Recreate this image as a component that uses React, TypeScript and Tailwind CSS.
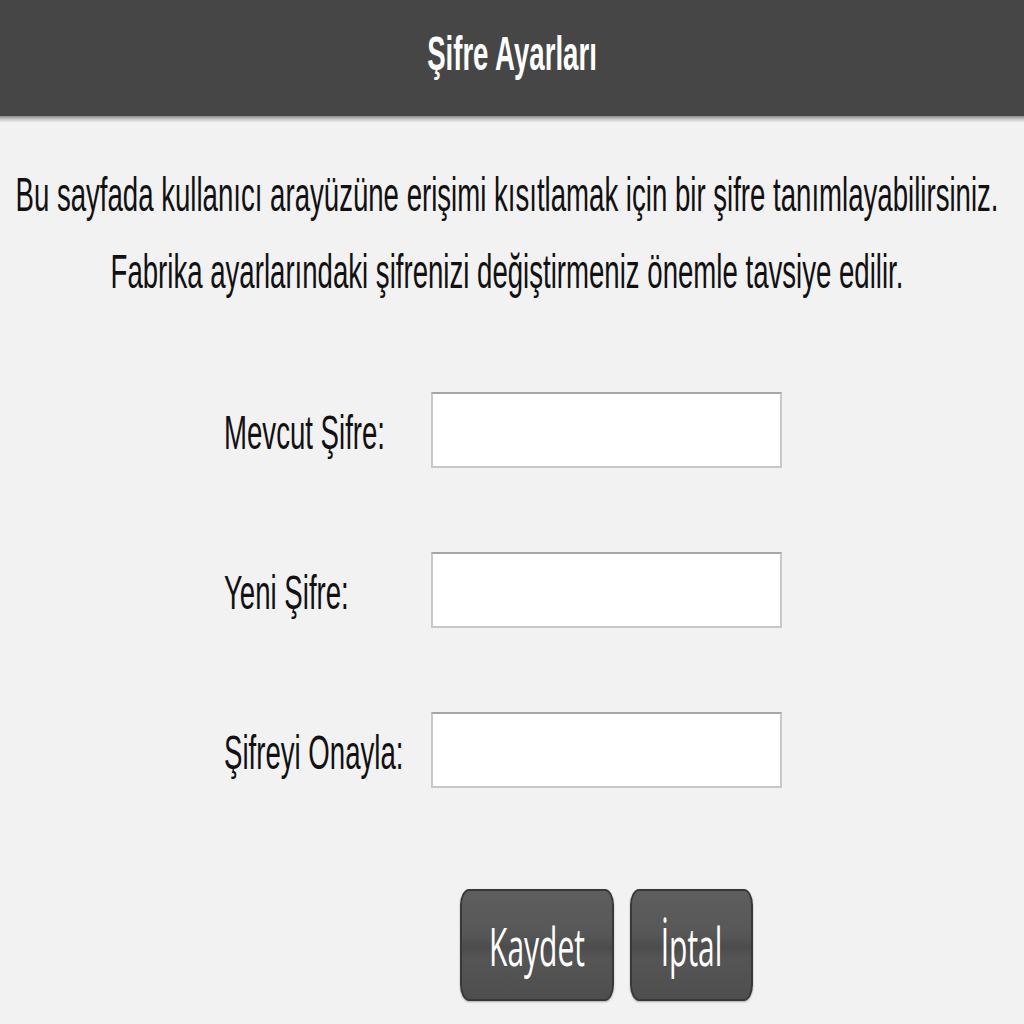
import React from "react";

// the screenshot is stretched vertically, so text is drawn tall
const Tall = ({
  children,
  className = "",
}: {
  children: React.ReactNode;
  className?: string;
}) => (
  <span className={`inline-block origin-center scale-y-[1.75] whitespace-nowrap ${className}`}>
    {children}
  </span>
);

const fields = ["Mevcut Şifre:", "Yeni Şifre:", "Şifreyi Onayla:"];

const Button = ({ label, width }: { label: string; width: string }) => (
  <button
    className={`flex h-[112px] ${width} items-center justify-center rounded-[9px/16px] border-2 border-[#383838] bg-[linear-gradient(#5e5e5e_0%,#575757_40%,#4c4c4c_52%,#555555_62%,#4e4e4e_100%)] font-['Open_Sans',sans-serif] text-[30px] text-white shadow-[0_1px_2px_rgba(0,0,0,0.3)]`}
  >
    <Tall>{label}</Tall>
  </button>
);

export default function App() {
  return (
    <div className="min-h-[1024px] w-full bg-[#f2f2f2] font-['Liberation_Sans',Arial,sans-serif] text-[#111]">
      {/* header */}
      <header className="flex h-[116px] items-center justify-center bg-[#464646] pb-[8px]">
        <Tall className="text-[27.6px] font-bold text-white">Şifre Ayarları</Tall>
      </header>
      <div className="h-[6px] bg-[linear-gradient(#8a8a8a,#c4c4c4,#e8e8e8)]" />

      {/* info */}
      <div className="mt-[34px] pr-[10px] text-[27.6px]">
        <div className="flex h-[77px] items-center justify-center">
          <Tall>
            Bu sayfada kullanıcı arayüzüne erişimi kısıtlamak için bir şifre
            tanımlayabilirsiniz.
          </Tall>
        </div>
        <div className="flex h-[77px] items-center justify-center">
          <Tall>
            Fabrika ayarlarındaki şifrenizi değiştirmeniz önemle tavsiye edilir.
          </Tall>
        </div>
      </div>

      {/* form */}
      <div className="mt-[82px] flex justify-center pr-[18px]">
        <div className="grid grid-cols-[207px_351px] items-center gap-y-[84px]">
          {fields.map((f) => (
            <React.Fragment key={f}>
              <div className="pt-[6px] text-[27.6px]">
                <Tall>{f}</Tall>
              </div>
              <input
                type="password"
                className="h-[76px] w-[351px] border-2 border-[#c8c8c8] border-t-[#a6a6a6] bg-white outline-none"
              />
            </React.Fragment>
          ))}
          <div />
          <div className="mt-[17px] flex justify-center gap-[16px]">
            <Button label="Kaydet" width="w-[154px]" />
            <Button label="İptal" width="w-[123px]" />
          </div>
        </div>
      </div>
    </div>
  );
}
